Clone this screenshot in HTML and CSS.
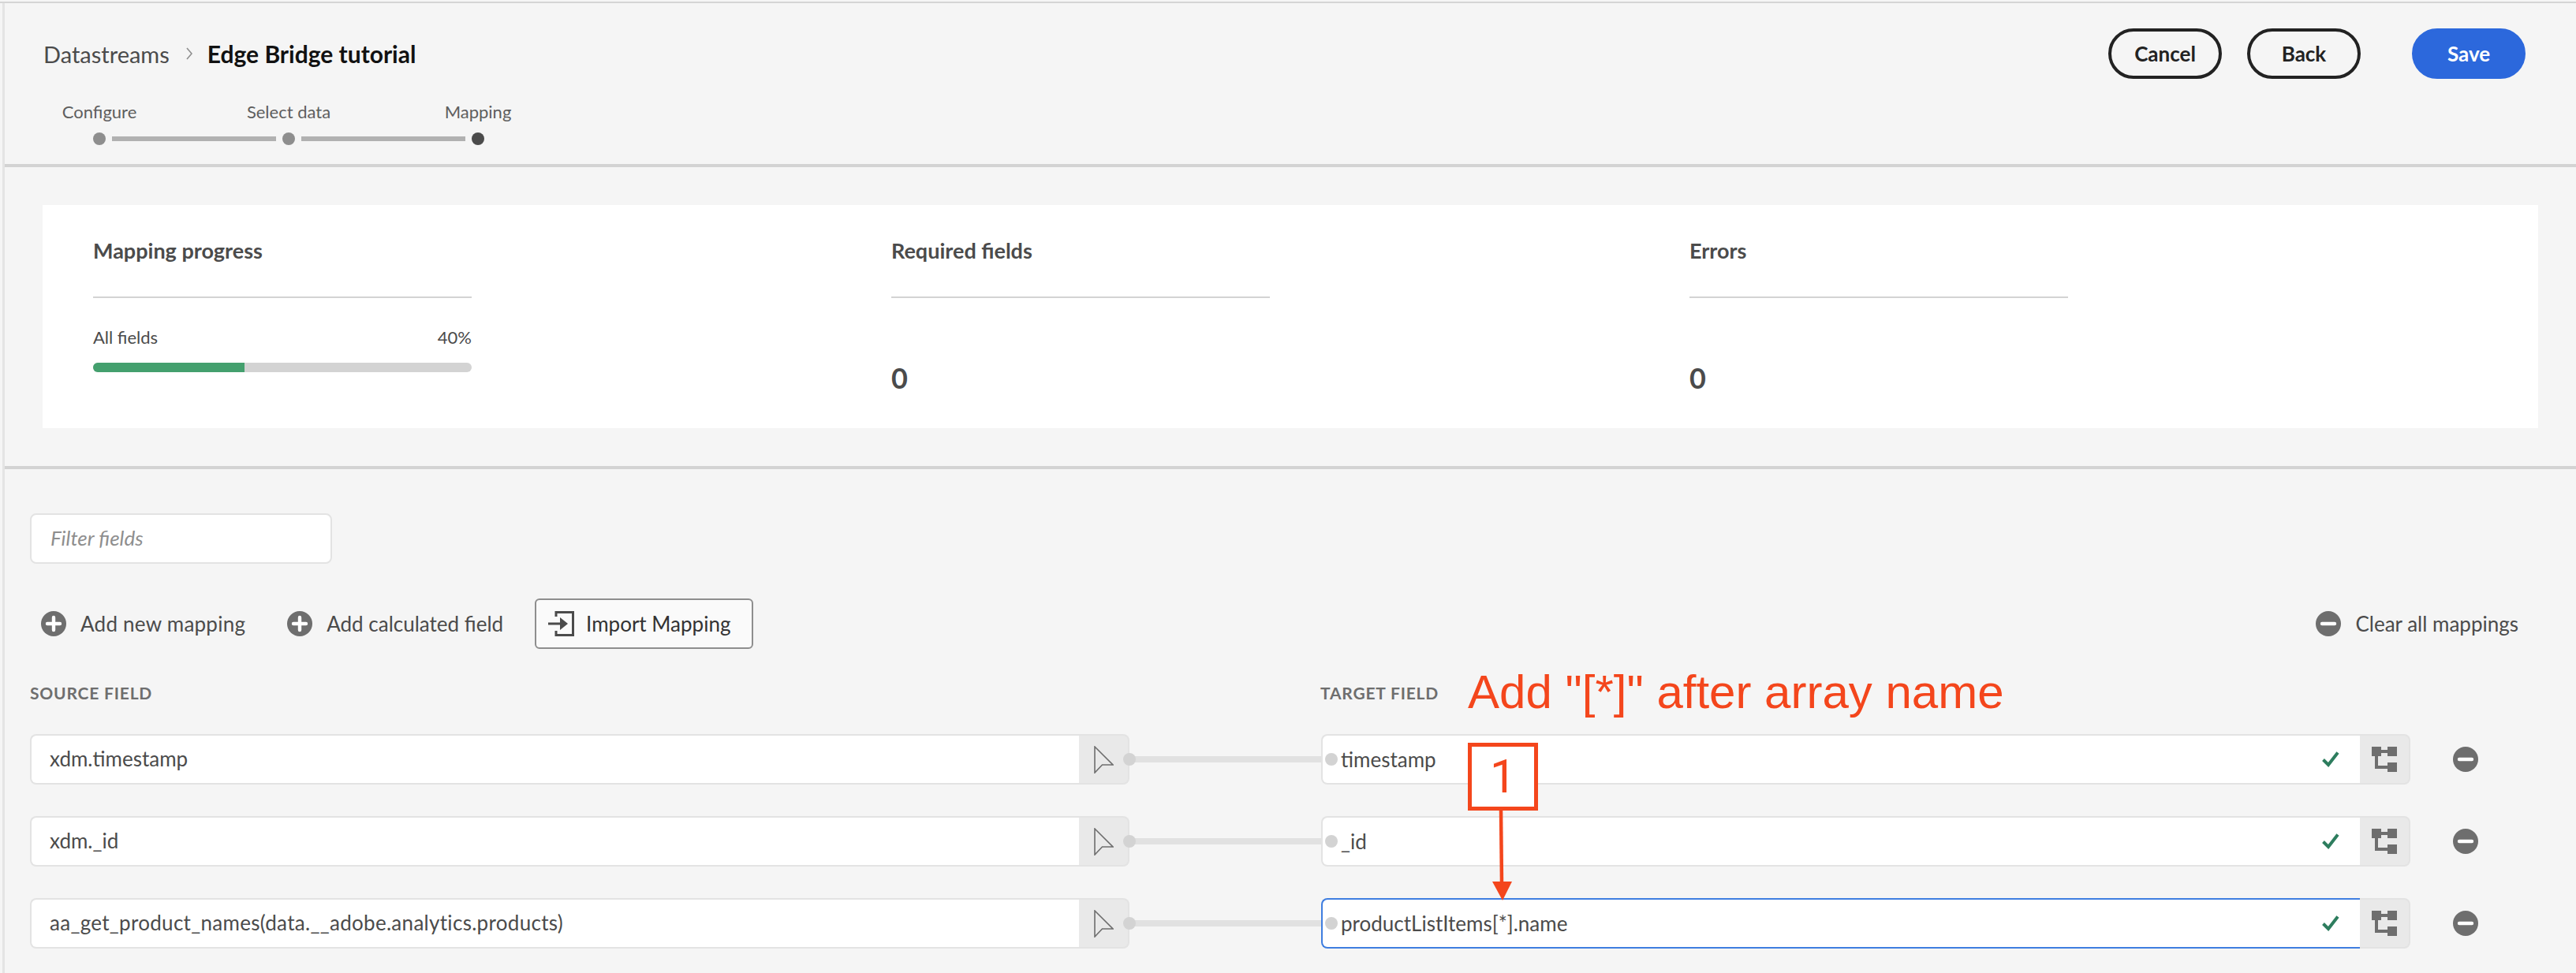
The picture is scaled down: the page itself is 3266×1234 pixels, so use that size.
FILE: index.html
```html
<!DOCTYPE html>
<html lang="en">
<head>
<meta charset="utf-8">
<title>Edge Bridge tutorial - Mapping</title>
<link rel="stylesheet" href="styles.css">
</head>
<body>
<div class="app">
  <div class="page">
    <header class="header">
      <div class="header-left">
        <div class="crumbs">
          <span class="crumb">Datastreams</span>
          <svg class="crumb-chevron" viewBox="0 0 8 16"><path d="M1 1l6 7-6 7" fill="none" stroke="#8e8e8e" stroke-width="1.6"/></svg>
          <span class="crumb-current">Edge Bridge tutorial</span>
        </div>
        <div class="stepper">
          <div class="step">
            <span class="step-label">Configure</span>
            <div class="track"><i class="seg seg-none"></i><i class="dot"></i><i class="seg"></i></div>
          </div>
          <div class="step">
            <span class="step-label">Select data</span>
            <div class="track"><i class="seg"></i><i class="dot"></i><i class="seg"></i></div>
          </div>
          <div class="step">
            <span class="step-label">Mapping</span>
            <div class="track"><i class="seg"></i><i class="dot dot-current"></i><i class="seg seg-none"></i></div>
          </div>
        </div>
      </div>
      <div class="header-actions">
        <button class="pill">Cancel</button>
        <button class="pill pill-back">Back</button>
        <button class="pill pill-primary">Save</button>
      </div>
    </header>

    <section class="summary-band">
      <div class="card">
        <div class="stat">
          <div class="stat-title">Mapping progress</div>
          <div class="progress-label"><span>All fields</span><span>40%</span></div>
          <div class="progress"><div class="progress-fill" style="width:40%"></div></div>
        </div>
        <div class="stat">
          <div class="stat-title">Required fields</div>
          <div class="stat-value">0</div>
        </div>
        <div class="stat">
          <div class="stat-title">Errors</div>
          <div class="stat-value">0</div>
        </div>
      </div>
    </section>

    <main class="mapping">
      <div class="filter">Filter fields</div>

      <div class="actions">
        <span class="action action-new">
          <svg class="round-icon" viewBox="0 0 32 32"><circle cx="16" cy="16" r="16" fill="#6e6e6e"/><path d="M16 8v16M8 16h16" stroke="#fff" stroke-width="4.4" stroke-linecap="round"/></svg>
          Add new mapping
        </span>
        <span class="action action-calc">
          <svg class="round-icon" viewBox="0 0 32 32"><circle cx="16" cy="16" r="16" fill="#6e6e6e"/><path d="M16 8v16M8 16h16" stroke="#fff" stroke-width="4.4" stroke-linecap="round"/></svg>
          Add calculated field
        </span>
        <button class="import">
          <svg class="import-icon" viewBox="0 0 34 32"><path d="M10 7V1.500H31.500V30.500H10V25" fill="none" stroke="#4b4b4b" stroke-width="3"/><path d="M0 14.400H15V8L25 16 15 24V17.600H0z" fill="#4b4b4b"/></svg>
          Import Mapping
        </button>
        <span class="action action-clear">
          <svg class="round-icon" viewBox="0 0 32 32"><circle cx="16" cy="16" r="16" fill="#6e6e6e"/><path d="M8 16h16" stroke="#fff" stroke-width="4.400" stroke-linecap="round"/></svg>
          Clear all mappings
        </span>
      </div>

      <div class="field-heads">
        <span class="head head-source">SOURCE FIELD</span>
        <span class="head">TARGET FIELD</span>
      </div>

      <div class="rows">
        <div class="row">
          <div class="field field-source">
            <div class="field-body">xdm.timestamp</div>
            <div class="field-btn"><svg class="cursor" viewBox="0 0 25 35"><path d="M1 1l23 23H10.500L1 34z" fill="none" stroke="#6e6e6e" stroke-width="1.600"/></svg></div>
          </div>
          <div class="link"></div>
          <div class="field field-target">
            <div class="field-body"><i class="port"></i><span class="target-text">timestamp</span><svg class="check" viewBox="0 0 22 20"><path d="M1.500 10.500L8 17 20 1.500" fill="none" stroke="#2d7d5e" stroke-width="4"/></svg></div>
            <div class="field-btn"><svg class="tree" viewBox="0 0 32 32"><path d="M0 0h12v4h8V0h12v12H20V8h-8v4H8v12h12v-4h12v12H20v-4H4V12H0z" fill="#6e6e6e"/></svg></div>
          </div>
          <svg class="round-icon remove" viewBox="0 0 32 32"><circle cx="16" cy="16" r="16" fill="#6e6e6e"/><path d="M8 16h16" stroke="#fff" stroke-width="4.400" stroke-linecap="round"/></svg>
        </div>

        <div class="row">
          <div class="field field-source">
            <div class="field-body">xdm._id</div>
            <div class="field-btn"><svg class="cursor" viewBox="0 0 25 35"><path d="M1 1l23 23H10.500L1 34z" fill="none" stroke="#6e6e6e" stroke-width="1.600"/></svg></div>
          </div>
          <div class="link"></div>
          <div class="field field-target">
            <div class="field-body"><i class="port"></i><span class="target-text">_id</span><svg class="check" viewBox="0 0 22 20"><path d="M1.500 10.500L8 17 20 1.500" fill="none" stroke="#2d7d5e" stroke-width="4"/></svg></div>
            <div class="field-btn"><svg class="tree" viewBox="0 0 32 32"><path d="M0 0h12v4h8V0h12v12H20V8h-8v4H8v12h12v-4h12v12H20v-4H4V12H0z" fill="#6e6e6e"/></svg></div>
          </div>
          <svg class="round-icon remove" viewBox="0 0 32 32"><circle cx="16" cy="16" r="16" fill="#6e6e6e"/><path d="M8 16h16" stroke="#fff" stroke-width="4.400" stroke-linecap="round"/></svg>
        </div>

        <div class="row">
          <div class="field field-source">
            <div class="field-body field-long">aa_get_product_names(data.__adobe.analytics.products)</div>
            <div class="field-btn"><svg class="cursor" viewBox="0 0 25 35"><path d="M1 1l23 23H10.500L1 34z" fill="none" stroke="#6e6e6e" stroke-width="1.600"/></svg></div>
          </div>
          <div class="link"></div>
          <div class="field field-target field-focus">
            <div class="field-body"><i class="port"></i><span class="target-text">productListItems[*].name</span><svg class="check" viewBox="0 0 22 20"><path d="M1.500 10.500L8 17 20 1.500" fill="none" stroke="#2d7d5e" stroke-width="4"/></svg></div>
            <div class="field-btn"><svg class="tree" viewBox="0 0 32 32"><path d="M0 0h12v4h8V0h12v12H20V8h-8v4H8v12h12v-4h12v12H20v-4H4V12H0z" fill="#6e6e6e"/></svg></div>
          </div>
          <svg class="round-icon remove" viewBox="0 0 32 32"><circle cx="16" cy="16" r="16" fill="#6e6e6e"/><path d="M8 16h16" stroke="#fff" stroke-width="4.400" stroke-linecap="round"/></svg>
        </div>
      </div>
    </main>
  </div>

  <div class="note">Add "[*]" after array name</div>
  <div class="note-box">1</div>
  <svg class="note-arrow" viewBox="0 0 28 114"><path d="M12 0l1 92" stroke="#f4461c" stroke-width="4.500" fill="none"/><path d="M1 90h25L14 114z" fill="#f4461c"/></svg>
</div>
</body>
</html>
```

FILE: styles.css
```css
* { box-sizing: border-box; }
html, body { margin: 0; padding: 0; }
body {
  background: #f5f5f5;
  color: #4b4b4b;
  font-family: Lato, "Open Sans", "Liberation Sans", sans-serif;
  width: 3266px;
  height: 1234px;
  overflow: hidden;
}
.app {
  position: relative;
  width: 3266px;
  height: 1234px;
  padding-top: 2px;
  overflow: hidden;
}
.page {
  height: 1232px;
  border-top: 2px solid #d5d5d5;
  padding-left: 6px;
  position: relative;
}
.page::before {
  content: "";
  position: absolute;
  left: 3px;
  top: 0;
  bottom: 0;
  width: 3px;
  background: #e4e4e4;
}

/* header */
.header {
  display: flex;
  justify-content: space-between;
  height: 208px;
  border-bottom: 4px solid #d3d3d3;
  padding: 32px 64px 0 0;
}
.crumbs {
  display: flex;
  align-items: center;
  height: 64px;
  margin: 0 0 0 49px;
  font-size: 29px;
}
.crumb { color: #4b4b4b; }
.crumb-chevron { width: 8px; height: 16px; margin: 0 19px 0 21px; }
.crumb-current { color: #111; font-weight: 700; font-size: 30px; }
.stepper { display: flex; margin-top: 27px; }
.step { width: 240px; display: flex; flex-direction: column; align-items: center; }
.step-label { font-size: 22px; line-height: 30px; color: #5e5e5e; }
.track { display: flex; align-items: center; gap: 8px; height: 16px; margin-top: 11px; width: 240px; }
.seg { flex: 1; height: 6px; background: #b1b1b1; }
.seg-none { background: transparent; }
.dot { width: 16px; height: 16px; border-radius: 50%; background: #8e8e8e; }
.dot-current { background: #4b4b4b; }
.header-actions { display: flex; align-items: flex-start; }
.pill {
  width: 144px;
  height: 64px;
  border-radius: 32px;
  border: 4px solid #222;
  background: transparent;
  color: #222;
  font: 700 26px Lato, sans-serif;
  padding: 0;
}
.pill-back { margin-left: 32px; }
.pill-primary { margin-left: 65px; background: #2c68dc; border-color: #2c68dc; color: #fff; }

/* summary */
.summary-band {
  height: 383px;
  padding: 48px 48px 0;
  border-bottom: 4px solid #d3d3d3;
}
.card {
  display: flex;
  width: 3164px;
  height: 283px;
  background: #fff;
  padding: 42px 64px 0;
}
.stat { width: 1012px; }
.stat-title {
  width: 480px;
  height: 76px;
  line-height: 32px;
  border-bottom: 2px solid #d3d3d3;
  font-size: 27px;
  font-weight: 700;
}
.progress-label {
  width: 480px;
  display: flex;
  justify-content: space-between;
  margin-top: 35px;
  font-size: 22px;
  line-height: 30px;
}
.progress { width: 480px; height: 12px; margin-top: 17px; border-radius: 6px; background: #d3d3d3; overflow: hidden; }
.progress-fill { height: 100%; background: #44a06e; }
.stat-value { margin-top: 81px; font-size: 36px; line-height: 40px; font-weight: 700; }

/* mapping */
.mapping { padding: 56px 0 0 32px; }
.filter {
  width: 383px;
  height: 64px;
  background: #fff;
  border: 2px solid #e3e3e3;
  border-radius: 8px;
  padding-left: 24px;
  font-size: 26px;
  line-height: 58px;
  font-style: italic;
  color: #8e8e8e;
}
.actions {
  display: flex;
  align-items: center;
  width: 3155px;
  height: 64px;
  margin-top: 44px;
  font-size: 26px;
}
.action { display: flex; align-items: center; gap: 18px; margin-left: 14px; }
.action-new { letter-spacing: 0.25px; }
.action-calc { margin-left: 53px; }
.action-clear { margin-left: auto; }
.round-icon { width: 32px; height: 32px; flex: none; }
.import {
  display: flex;
  align-items: center;
  gap: 14px;
  width: 277px;
  height: 64px;
  margin-left: 40px;
  padding: 0 0 0 15px;
  background: #fafafa;
  border: 2px solid #8e8e8e;
  border-radius: 6px;
  color: #333;
  font: 400 26px Lato, sans-serif;
}
.import-icon { width: 34px; height: 32px; flex: none; }
.field-heads { display: flex; height: 30px; margin-top: 40px; align-items: center; font-size: 21px; font-weight: 700; color: #6e6e6e; letter-spacing: 0.8px; }
.head-source { width: 1636px; }
.rows { display: flex; flex-direction: column; gap: 40px; margin-top: 38px; }
.row { display: flex; align-items: center; height: 64px; }
.field { display: flex; height: 64px; }
.field-source { width: 1394px; }
.field-target { width: 1381px; }
.field-body {
  flex: 1;
  display: flex;
  align-items: center;
  background: #fff;
  padding-left: 23px;
  padding-bottom: 2px;
  font-size: 26px;
  border: 2px solid #e3e3e3;
  border-right: 0;
  border-radius: 8px 0 0 8px;
}
.field-long { letter-spacing: 0.3px; }
.field-target .field-body { padding: 0 26px 0 3px; }
.field-focus .field-body { border-color: #3f7ee0; }
.field-btn {
  width: 64px;
  background: #e9e9e9;
  border: 2px solid #e3e3e3;
  border-left: 0;
  border-radius: 0 8px 8px 0;
  display: flex;
  align-items: center;
  justify-content: center;
}
.cursor { width: 25px; height: 35px; }
.check { width: 22px; height: 20px; margin-left: auto; }
.tree { width: 32px; height: 32px; }
.port { width: 16px; height: 16px; border-radius: 50%; background: #d3d3d3; flex: none; }
.target-text { margin-left: 4px; }
.link { width: 243px; height: 8px; background: #e1e1e1; position: relative; }
.link::before {
  content: "";
  position: absolute;
  left: -8px;
  top: -4px;
  width: 16px;
  height: 16px;
  border-radius: 50%;
  background: #d3d3d3;
}
.remove { margin-left: 54px; }

/* annotation */
.note {
  position: absolute;
  left: 1861px;
  top: 843px;
  font: 60px/70px "Liberation Sans", Arial, sans-serif;
  color: #f4461c;
  white-space: nowrap;
}
.note-box {
  position: absolute;
  left: 1861px;
  top: 942px;
  width: 89px;
  height: 86px;
  background: #fff;
  border: 5px solid #f4461c;
  font: 59px/76px Roboto, "Liberation Sans", sans-serif;
  color: #f4461c;
  text-align: center;
}
.note-arrow {
  position: absolute;
  left: 1891px;
  top: 1028px;
  width: 28px;
  height: 114px;
}
```
